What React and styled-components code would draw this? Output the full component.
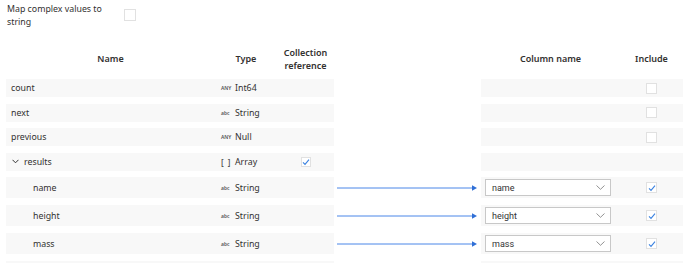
import React from 'react';
import styled, { createGlobalStyle } from 'styled-components';

const GlobalStyle = createGlobalStyle`
  body {
    margin: 0;
    background: #fff;
    font-family: "Noto Sans", "Open Sans", sans-serif;
    color: #323130;
  }
`;

const Page = styled.div`
  width: 690px;
  height: 263px;
  overflow: hidden;
  padding: 3px 0 0 6px;
  box-sizing: border-box;
`;

const Option = styled.div`
  display: flex;
  align-items: flex-start;
  padding-left: 1px;

  span {
    width: 104px;
    font-size: 8.8px;
    line-height: 13px;
  }
`;

const Box = styled.div`
  width: ${p => p.size || 10}px;
  height: ${p => p.size || 10}px;
  border: 1px solid #e1e1e1;
  background: #fff;
  display: flex;
  align-items: center;
  justify-content: center;
  box-sizing: border-box;
  margin-top: ${p => p.top || 0}px;
  margin-left: ${p => p.left || 0}px;

  svg {
    width: 8px;
    height: 8px;
  }
`;

const Table = styled.div`
  display: flex;
  flex-direction: column;
  margin-top: 16px;
  width: 677px;
`;

const Columns = styled.div`
  display: grid;
  grid-template-columns: 209px 62px 57px 147px 139px 63px;
`;

const Head = styled(Columns)`
  height: 33px;
  padding-bottom: 6px;
  box-sizing: border-box;
  align-items: center;
  margin-bottom: 1px;
`;

const HeadCell = styled.div`
  font-size: 9px;
  font-weight: 600;
  line-height: 13px;
  text-align: center;
`;

const Row = styled(Columns)`
  height: ${p => (p.child ? 21 : 18)}px;
  margin-bottom: ${p => (p.child ? 7 : 6.5)}px;
  flex-shrink: 0;
`;

const Cell = styled.div`
  display: flex;
  align-items: center;
  background: ${p => (p.blank ? 'transparent' : '#f8f8f8')};
  justify-content: ${p => p.align || 'flex-start'};
  font-size: 8.8px;
  padding-left: ${p => p.indent || 0}px;
  box-sizing: border-box;
`;

const TypeTag = styled.span`
  width: 14px;
  font-size: ${p => (p.bracket ? 8 : 5)}px;
  letter-spacing: ${p => (p.bracket ? 1 : 0)}px;
  color: #555;
  font-weight: 600;
`;

const Chevron = styled.svg`
  width: 7px;
  height: 5px;
  margin: 0 5px 0 1px;
`;

const Arrow = styled.svg`
  width: 147px;
  height: 8px;
`;

const Select = styled.div`
  margin-left: 4px;
  width: 126px;
  height: 17px;
  border: 1px solid #c8c8c8;
  background: #fff;
  box-sizing: border-box;
  display: flex;
  align-items: center;
  justify-content: space-between;
  padding: 0 5px 0 6px;
  font-family: Roboto, "Noto Sans", sans-serif;
  font-size: 9px;
  color: #333;

  svg {
    width: 9px;
    height: 5px;
  }
`;

const Check = () => (
  <svg viewBox="0 0 8 8">
    <path d="M1 4.4 L3 6.4 L7 1.6" fill="none" stroke="#3b82e0" strokeWidth="1.1" />
  </svg>
);

const rows = [
  { name: 'count', tag: 'ANY', type: 'Int64' },
  { name: 'next', tag: 'abc', type: 'String' },
  { name: 'previous', tag: 'ANY', type: 'Null' },
  { name: 'results', tag: '[ ]', type: 'Array', open: true, collection: true },
  { name: 'name', tag: 'abc', type: 'String', child: true },
  { name: 'height', tag: 'abc', type: 'String', child: true },
  { name: 'mass', tag: 'abc', type: 'String', child: true },
  { name: '', child: true },
];

const App = () => (
  <Page>
    <GlobalStyle />
    <Option>
      <span>Map complex values to string</span>
      <Box size={12} top={6} left={13} />
    </Option>
    <Table>
      <Head>
        <HeadCell>Name</HeadCell>
        <HeadCell>Type</HeadCell>
        <HeadCell>Collection reference</HeadCell>
        <div />
        <HeadCell>Column name</HeadCell>
        <HeadCell>Include</HeadCell>
      </Head>
      {rows.map((r, i) => (
        <Row key={i} child={r.child}>
          <Cell indent={r.child ? 27 : 5}>
            {r.open && (
              <Chevron viewBox="0 0 7 5">
                <path d="M0.5 0.8 L3.5 3.8 L6.5 0.8" fill="none" stroke="#333" strokeWidth="1" />
              </Chevron>
            )}
            {r.name}
          </Cell>
          <Cell indent={6}>
            {r.tag && <TypeTag bracket={r.tag === '[ ]'}>{r.tag}</TypeTag>}
            {r.type}
          </Cell>
          <Cell align="center">
            {r.collection && (
              <Box size={10}>
                <Check />
              </Box>
            )}
          </Cell>
          <Cell blank align="center">
            {r.child && r.name && (
              <Arrow viewBox="0 0 147 8">
                <line x1="3" y1="4" x2="139" y2="4" stroke="#4a86e8" strokeWidth="1" />
                <path d="M138 1.2 L143 4 L138 6.8 Z" fill="#2f6fd6" />
              </Arrow>
            )}
          </Cell>
          <Cell>
            {r.child && r.name && (
              <Select>
                {r.name}
                <svg viewBox="0 0 9 5">
                  <path d="M0.5 0.5 L4.5 4.3 L8.5 0.5" fill="none" stroke="#777" strokeWidth="0.8" />
                </svg>
              </Select>
            )}
          </Cell>
          <Cell align="flex-start" indent={26}>
            {r.child && r.name ? (
              <Box size={11}>
                <Check />
              </Box>
            ) : (
              !r.collection && r.name && <Box size={11} />
            )}
          </Cell>
        </Row>
      ))}
    </Table>
  </Page>
);

export default App;
